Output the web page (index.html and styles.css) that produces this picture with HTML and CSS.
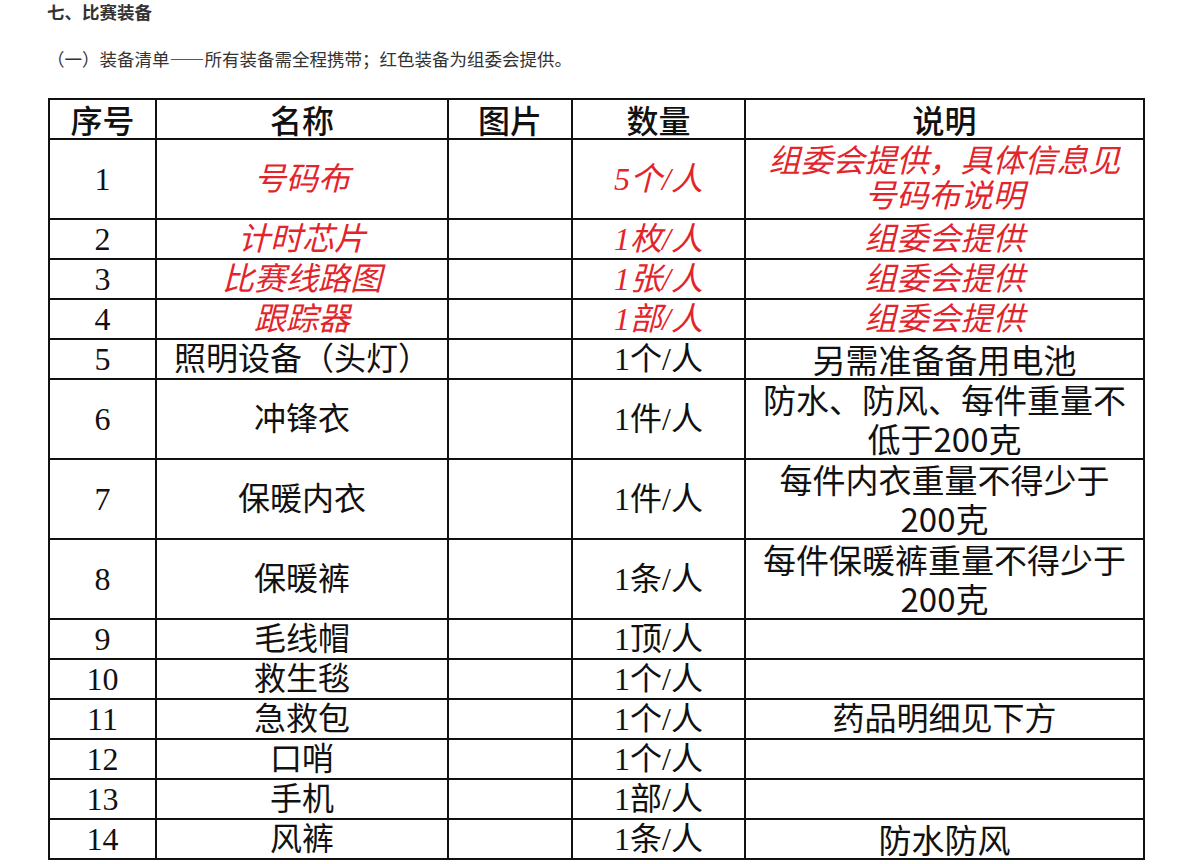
FILE: index.html
```html
<!DOCTYPE html>
<html lang="zh-CN">
<head>
<meta charset="utf-8">
<title>比赛装备</title>
<link rel="stylesheet" href="styles.css">
</head>
<body>
<div class="page">
  <h3 class="title">七、比赛装备</h3>
  <p class="sub">（一）装备清单——所有装备需全程携带；红色装备为组委会提供。</p>
  <table class="gear">
    <colgroup>
      <col class="c-no"><col class="c-name"><col class="c-pic"><col class="c-qty"><col class="c-desc">
    </colgroup>
    <thead>
      <tr class="r1"><th>序号</th><th>名称</th><th>图片</th><th>数量</th><th>说明</th></tr>
    </thead>
    <tbody>
      <tr class="r2 red"><td class="no">1</td><td class="nm">号码布</td><td></td><td class="qty">5个/人</td><td class="desc tight">组委会提供，具体信息见<br>号码布说明</td></tr>
      <tr class="r1 red"><td class="no">2</td><td class="nm">计时芯片</td><td></td><td class="qty">1枚/人</td><td class="desc">组委会提供</td></tr>
      <tr class="r1 red"><td class="no">3</td><td class="nm">比赛线路图</td><td></td><td class="qty">1张/人</td><td class="desc">组委会提供</td></tr>
      <tr class="r1 red"><td class="no">4</td><td class="nm">跟踪器</td><td></td><td class="qty">1部/人</td><td class="desc">组委会提供</td></tr>
      <tr class="r1"><td class="no">5</td><td class="nm">照明设备（头灯）</td><td></td><td class="qty">1个/人</td><td class="desc sans">另需准备备用电池</td></tr>
      <tr class="r2"><td class="no">6</td><td class="nm">冲锋衣</td><td></td><td class="qty">1件/人</td><td class="desc sans two">防水、防风、每件重量不<br>低于200克</td></tr>
      <tr class="r2"><td class="no">7</td><td class="nm">保暖内衣</td><td></td><td class="qty">1件/人</td><td class="desc sans two">每件内衣重量不得少于<br>200克</td></tr>
      <tr class="r2"><td class="no">8</td><td class="nm">保暖裤</td><td></td><td class="qty">1条/人</td><td class="desc sans two">每件保暖裤重量不得少于<br>200克</td></tr>
      <tr class="r1"><td class="no">9</td><td class="nm">毛线帽</td><td></td><td class="qty">1顶/人</td><td class="desc"></td></tr>
      <tr class="r1"><td class="no">10</td><td class="nm">救生毯</td><td></td><td class="qty">1个/人</td><td class="desc"></td></tr>
      <tr class="r1"><td class="no">11</td><td class="nm">急救包</td><td></td><td class="qty">1个/人</td><td class="desc">药品明细见下方</td></tr>
      <tr class="r1"><td class="no">12</td><td class="nm">口哨</td><td></td><td class="qty">1个/人</td><td class="desc"></td></tr>
      <tr class="r1"><td class="no">13</td><td class="nm">手机</td><td></td><td class="qty">1部/人</td><td class="desc"></td></tr>
      <tr class="r1"><td class="no">14</td><td class="nm">风裤</td><td></td><td class="qty">1条/人</td><td class="desc sans">防水防风</td></tr>
    </tbody>
  </table>
</div>
</body>
</html>
```
FILE: styles.css
```css
html, body {
  margin: 0;
  padding: 0;
  background: #fff;
}
.page {
  padding: 0 0 0 47px;
  font-family: "Noto Sans CJK SC", sans-serif;
  color: #333;
}
.title {
  margin: 0;
  font-size: 17.5px;
  line-height: 24px;
  font-weight: 700;
}
.sub {
  margin: 23px 0 0 0;
  font-size: 17.5px;
  line-height: 24px;
}
.gear {
  margin: 27px 0 0 1px;
  border-collapse: collapse;
  table-layout: fixed;
  width: 1097px;
  color: #111;
  font-family: "Liberation Serif", "Noto Sans CJK SC", serif;
  font-size: 32px;
}
.c-no { width: 107px; }
.c-name { width: 292px; }
.c-pic { width: 124px; }
.c-qty { width: 173px; }
.c-desc { width: 399px; }
.gear th, .gear td {
  border: 2px solid #111;
  padding: 0;
  text-align: center;
  vertical-align: middle;
  line-height: 38px;
  white-space: nowrap;
}
.gear th {
  font-weight: 500;
  font-family: "Noto Sans CJK SC", sans-serif;
}
.gear td {
  font-weight: 400;
}
.r1 { height: 40px; }
.r2 { height: 80px; }
.red .nm, .red .qty, .red .desc {
  color: #e3242b;
  font-style: italic;
}
.desc.sans {
  font-family: "Noto Sans CJK SC", sans-serif;
  font-size: 33px;
}
.desc.two {
  line-height: 39px;
}
.desc.tight {
  line-height: 35px;
}
```
